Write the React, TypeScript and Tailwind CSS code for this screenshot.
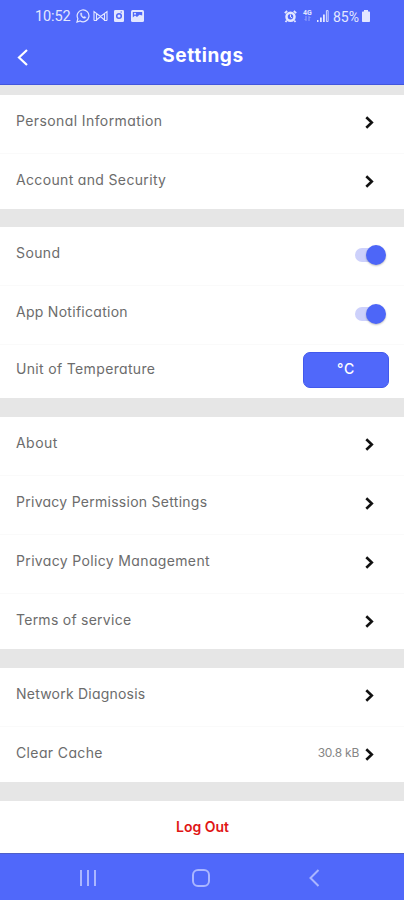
import { useState } from 'react';
import type { ReactNode } from 'react';

function Chevron() {
  return (
    <svg width="9" height="13" viewBox="0 0 9 13" fill="none" stroke="#111111" strokeWidth="2.6" className="mt-[2px]">
      <path d="m1.300 1.200 5.500 5.300-5.500 5.300" />
    </svg>
  );
}

function Toggle({ label }: { label: string }) {
  const [on, setOn] = useState(true);

  return (
    <button
      role="switch"
      aria-label={label}
      aria-checked={on}
      onClick={() => setOn(!on)}
      className="mt-[3px] flex h-5 w-[31px] items-center"
    >
      <span className={`h-[14px] w-[20px] rounded-full ${on ? 'bg-[#cdd1fb]' : 'bg-gray-300'}`} />
      <span
        className={`-ml-[9px] h-5 w-5 shrink-0 rounded-full shadow-[0_1px_2px_rgba(0,0,0,0.25)] ${on ? 'bg-[#4d66f8]' : 'bg-gray-100'}`}
      />
    </button>
  );
}

function Row({ label, tracking, children }: { label: string; tracking: string; children?: ReactNode }) {
  return (
    <div className="flex h-[59px] shrink-0 items-center justify-between border-b border-[#fafafa] pr-[30px] pb-[6px] pl-4">
      <span className={`text-[14px] leading-5 whitespace-nowrap text-[#6c6c6c] ${tracking}`}>{label}</span>
      {children ?? <Chevron />}
    </div>
  );
}

function StatusBar() {
  return (
    <div className="flex h-8 items-center justify-between pr-[34px] pl-[35px] text-[#e3e7ff]">
      <div className="flex items-center">
        <span className="mt-[2px] w-[37px] font-[Roboto,sans-serif] text-[14.5px] leading-4 tracking-[-0.1px]">10:52</span>
        <svg className="ml-1" width="14" height="14" viewBox="0 0 14 14" fill="none" stroke="currentColor" strokeWidth="1.2">
          <path d="m1 13 .9-3.3A5.9 5.9 0 1 1 4.2 12Z" />
          <path d="M4.6 4.2c.3-.6 1-.4 1.1.1l.3.9-.5.7c.5 1 1.200 1.700 2.200 2.100l.7-.6 1.200.5c.5.3.1 1.200-.6 1.400C6.900 9.700 4 7 4.600 4.200Z" fill="currentColor" strokeWidth=".4" />
        </svg>
        <svg className="ml-[3px]" width="15" height="12" viewBox="0 0 15 12" fill="none" stroke="currentColor" strokeWidth="1.1">
          <path d="M1 10.500V1.500l6.500 5L14 1.500v9M1 10.500h2.500V4M14 10.500h-2.500V4M3.500 10 7.500 6.500l4 3.500" />
        </svg>
        <svg className="ml-[6px]" width="10" height="12" viewBox="0 0 10 12">
          <rect width="10" height="12" rx="1.300" fill="currentColor" />
          <circle cx="5" cy="6" r="2.300" fill="none" stroke="#5068f8" strokeWidth="1.500" />
          <path d="M6.500 2h1.500" stroke="#5068f8" />
        </svg>
        <svg className="ml-[7px]" width="13" height="12" viewBox="0 0 13 12">
          <rect width="13" height="12" rx="1.500" fill="currentColor" />
          <path d="M1.800 2h9.400v3.500L8.500 4.800 6 7 4 5.500 1.800 7.500Z" fill="#5068f8" />
          <circle cx="4" cy="3.800" r="1" fill="currentColor" />
        </svg>
      </div>
      <div className="flex items-center">
        <svg width="13" height="13" viewBox="0 0 13 13" fill="none" stroke="currentColor">
          <circle cx="6.500" cy="6.800" r="4" strokeWidth="2.500" />
          <path d="M6.500 4.500V7l1.800 1" strokeWidth="1" />
          <path d="M.8 3.200 3.200 1M12.200 3.200 9.800 1M2.800 10.500 1.500 12M10.200 10.500l1.300 1.500" strokeWidth="1.800" />
        </svg>
        <div className="ml-[6px] flex h-3 w-[9px] flex-col items-center">
          <span className="font-[Roboto,sans-serif] text-[7px] leading-[6px] font-bold">4G</span>
          <svg width="7" height="5" viewBox="0 0 7 5" fill="none" stroke="currentColor" strokeWidth=".8" opacity=".6">
            <path d="M2 0v4.500L.7 3.200M5 5V.5l1.300 1.300" />
          </svg>
        </div>
        <svg className="ml-[5px]" width="12" height="12" viewBox="0 0 12 12" fill="currentColor">
          <path d="M0 10h1.500v2H0zM3 7.500h1.800V12H3zM6 4.500h1.800V12H6z" />
          <path d="M9.400.6h1.700v10.900H9.400z" fill="none" stroke="currentColor" strokeWidth=".9" />
        </svg>
        <span className="mt-px ml-[4px] w-[28px] font-[Roboto,sans-serif] text-[14px] leading-4">85%</span>
        <svg className="ml-px" width="8" height="12" viewBox="0 0 8 12" fill="currentColor">
          <path d="M2 0h4v1.500h1c.6 0 1 .4 1 1V11c0 .6-.4 1-1 1H1c-.6 0-1-.4-1-1V2.500c0-.6.4-1 1-1h1Z" />
        </svg>
      </div>
    </div>
  );
}

export default function App() {
  const [celsius, setCelsius] = useState(true);

  return (
    <div className="flex h-[900px] w-[404px] flex-col overflow-hidden bg-[#e6e6e6] font-[Inter,sans-serif] [font-feature-settings:'cv11']">
      {/* Header */}
      <header className="h-[85px] shrink-0 border-b border-[#4256dc] bg-[#5068fa]">
        <StatusBar />
        <div className="grid h-[47px] grid-cols-[1fr_auto_1fr] items-center pl-[17px] text-white">
          <button aria-label="Back" className="mt-[4px]">
            <svg width="12" height="17" viewBox="0 0 12 17" fill="none" stroke="currentColor" strokeWidth="2.200">
              <path d="M10 1 2 8.500l8 7.500" />
            </svg>
          </button>
          <h1 className="pr-[15px] text-[19px] leading-6 font-bold tracking-[0.6px]">Settings</h1>
        </div>
      </header>

      <main className="flex min-h-0 flex-1 flex-col">
        <section className="mt-[10px] h-[114px] overflow-hidden bg-white">
          <Row label="Personal Information" tracking="tracking-[0.4px]" />
          <Row label="Account and Security" tracking="tracking-[0.34px]" />
        </section>

        <section className="mt-[18px] h-[171px] overflow-hidden bg-white">
          <Row label="Sound" tracking="tracking-[0.4px]">
            <div className="-mr-[12px] pt-px"><Toggle label="Sound" /></div>
          </Row>
          <Row label="App Notification" tracking="tracking-[0.28px]">
            <div className="-mr-[12px] pt-px"><Toggle label="App Notification" /></div>
          </Row>
          <div className="flex h-[53px] items-center justify-between pr-[15px] pb-[4px] pl-4">
            <span className="-mt-[2px] text-[14px] leading-5 tracking-[0.34px] text-[#6c6c6c]">Unit of Temperature</span>
            <button
              onClick={() => setCelsius(!celsius)}
              className="h-9 w-[86px] rounded-[7px] border border-[#4259ec] bg-[#5068fa] pb-[3px] text-[14px] font-medium tracking-[0.8px] text-white"
            >
              {celsius ? '°C' : '°F'}
            </button>
          </div>
        </section>

        <section className="mt-[19px] h-[232px] overflow-hidden bg-white">
          <Row label="About" tracking="tracking-[0.45px]" />
          <Row label="Privacy Permission Settings" tracking="tracking-[0.27px]" />
          <Row label="Privacy Policy Management" tracking="tracking-[0.35px]" />
          <Row label="Terms of service" tracking="tracking-[0.26px]" />
        </section>

        <section className="mt-[19px] h-[114px] overflow-hidden bg-white">
          <Row label="Network Diagnosis" tracking="tracking-[0.22px]" />
          <Row label="Clear Cache" tracking="tracking-[0.37px]">
            <div className="flex items-center gap-[6px]">
              <span className="text-[12px] leading-4 tracking-[-0.25px] text-[#858585]">30.8 kB</span>
              <Chevron />
            </div>
          </Row>
        </section>

        <button className="mt-[19px] h-[52px] bg-white pb-px pl-px text-[14px] font-semibold text-[#e01616]">Log Out</button>
      </main>

      {/* System navigation */}
      <nav className="flex h-[47px] shrink-0 items-center border-t border-[#4f60c8] bg-[#5068fa] pt-px pl-[79px] text-[#aab6ff]">
        <svg width="18" height="18" viewBox="0 0 18 18" stroke="currentColor" strokeWidth="2">
          <path d="M2 1v16M9 1v16M16 1v16" />
        </svg>
        <svg className="ml-[95px]" width="18" height="18" viewBox="0 0 18 18" fill="none" stroke="currentColor" strokeWidth="2">
          <rect x="1" y="1" width="16" height="16" rx="5" />
        </svg>
        <svg className="ml-[98px]" width="12" height="18" viewBox="0 0 12 18" fill="none" stroke="currentColor" strokeWidth="2">
          <path d="M10.500 1 2.500 9l8 8" />
        </svg>
      </nav>
    </div>
  );
}
